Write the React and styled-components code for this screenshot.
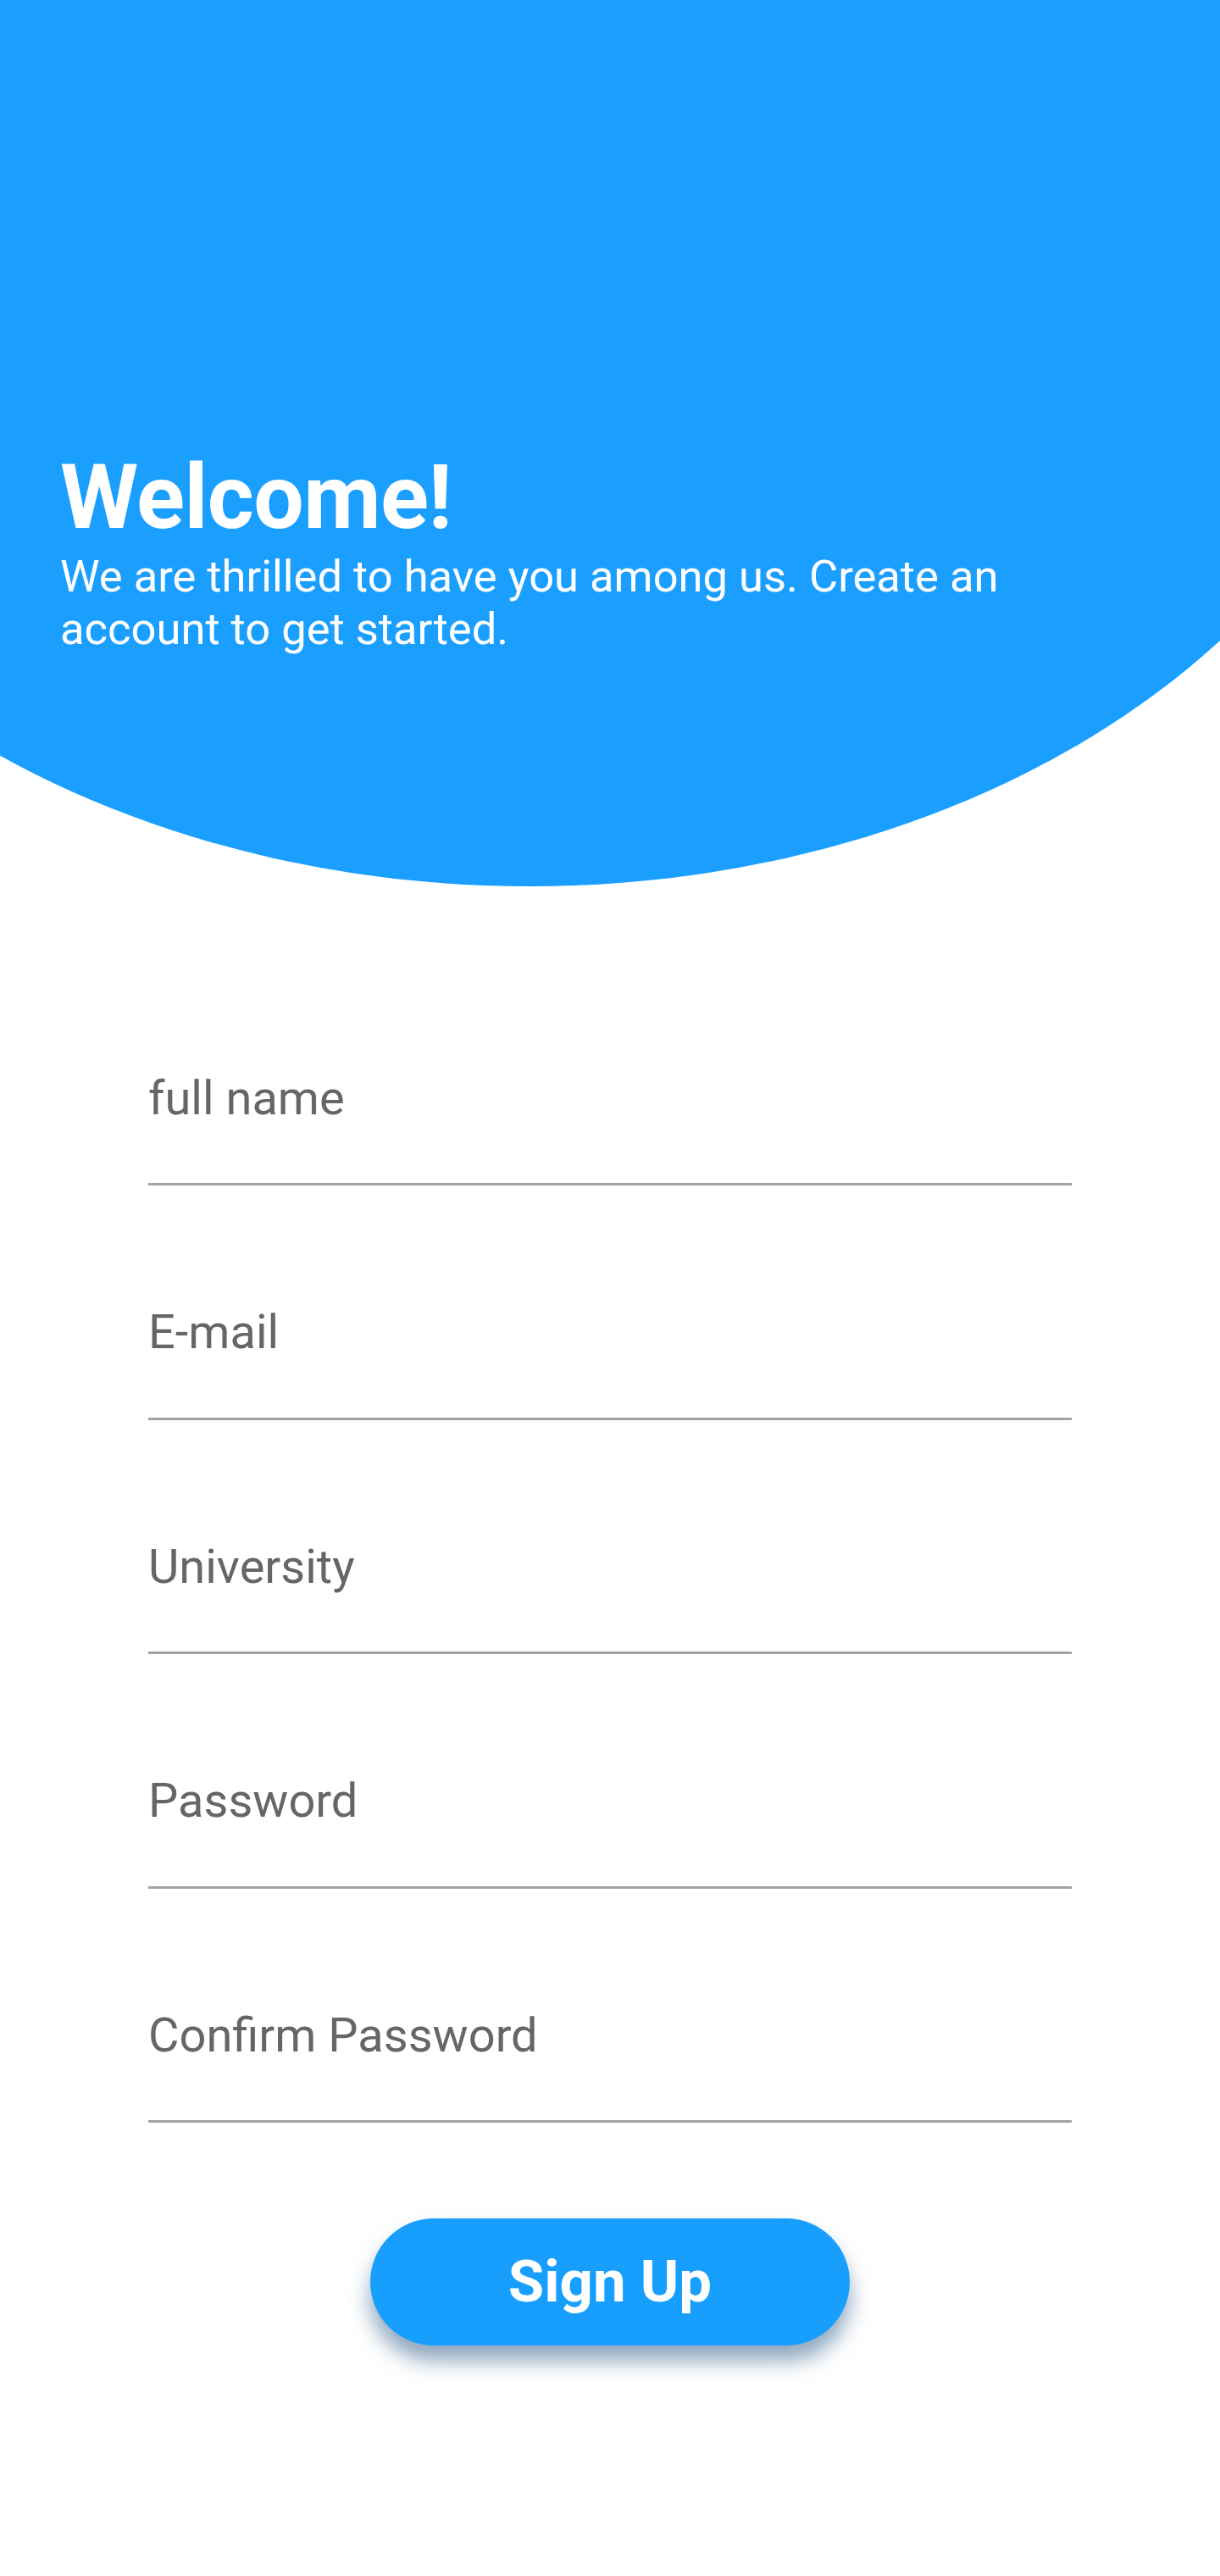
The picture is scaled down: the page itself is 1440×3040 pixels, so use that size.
import React from "react";
import styled, { createGlobalStyle } from "styled-components";

const GlobalStyle = createGlobalStyle`
  html, body {
    margin: 0;
    padding: 0;
    background: #ffffff;
  }
  body {
    font-family: Roboto, "Noto Sans", "Liberation Sans", sans-serif;
  }
  * { box-sizing: border-box; }
`;

const Page = styled.div`
  width: 1440px;
  min-height: 3040px;
  background: #ffffff;
  overflow: hidden;
`;

const Hero = styled.header`
  position: relative;
  height: 1046px;
  padding: 525px 0 0 71px;
  overflow: hidden;
  color: #ffffff;

  &::before {
    content: "";
    position: absolute;
    left: -425px;
    top: -524px;
    width: 2100px;
    height: 1570px;
    border-radius: 50%;
    background: #1b9fff;
    z-index: 0;
  }
`;

const HeroText = styled.div`
  position: relative;
  z-index: 1;
  width: 1200px;
`;

const Title = styled.h1`
  margin: 0;
  font-family: Roboto, "Liberation Sans", sans-serif;
  font-weight: 700;
  font-size: 105.5px;
  line-height: 124px;
  letter-spacing: -0.6px;
`;

const Subtitle = styled.p`
  margin: 0;
  font-family: Roboto, "Liberation Sans", sans-serif;
  font-weight: 400;
  font-size: 52.5px;
  line-height: 62px;
`;

const Form = styled.form`
  display: flex;
  flex-direction: column;
  align-items: center;
  padding-top: 213px;
  gap: 136.5px;
`;

const Field = styled.input`
  display: block;
  width: 1090px;
  height: 140px;
  padding: 0 0 64px 0;
  border: none;
  border-bottom: 3px solid #a2a2a2;
  outline: none;
  background: transparent;
  font-family: Roboto, "Liberation Sans", sans-serif;
  font-size: 56px;
  color: #444;

  &::placeholder {
    color: #666666;
    opacity: 1;
  }
`;

const SubmitRow = styled.div`
  display: flex;
  justify-content: center;
  margin-top: -24px;
`;

const SignUpButton = styled.button`
  width: 566px;
  height: 150px;
  border: none;
  border-radius: 75px;
  background: #189ffe;
  color: #ffffff;
  font-family: Roboto, "Liberation Sans", sans-serif;
  font-weight: 700;
  font-size: 69px;
  cursor: pointer;
  box-shadow: 0 18px 24px rgba(30, 80, 130, 0.5);
`;

const fields = [
  { name: "fullname", type: "text", placeholder: "full name" },
  { name: "email", type: "email", placeholder: "E-mail" },
  { name: "university", type: "text", placeholder: "University" },
  { name: "password", type: "password", placeholder: "Password" },
  { name: "confirm", type: "password", placeholder: "Confirm Password" },
];

export default function App() {
  return (
    <Page>
      <GlobalStyle />
      <Hero>
        <HeroText>
          <Title>Welcome!</Title>
          <Subtitle>
            We are thrilled to have you among us. Create an account to get started.
          </Subtitle>
        </HeroText>
      </Hero>
      <Form onSubmit={(e) => e.preventDefault()}>
        {fields.map((f) => (
          <Field key={f.name} name={f.name} type={f.type} placeholder={f.placeholder} />
        ))}
        <SubmitRow>
          <SignUpButton type="submit">Sign Up</SignUpButton>
        </SubmitRow>
      </Form>
    </Page>
  );
}
